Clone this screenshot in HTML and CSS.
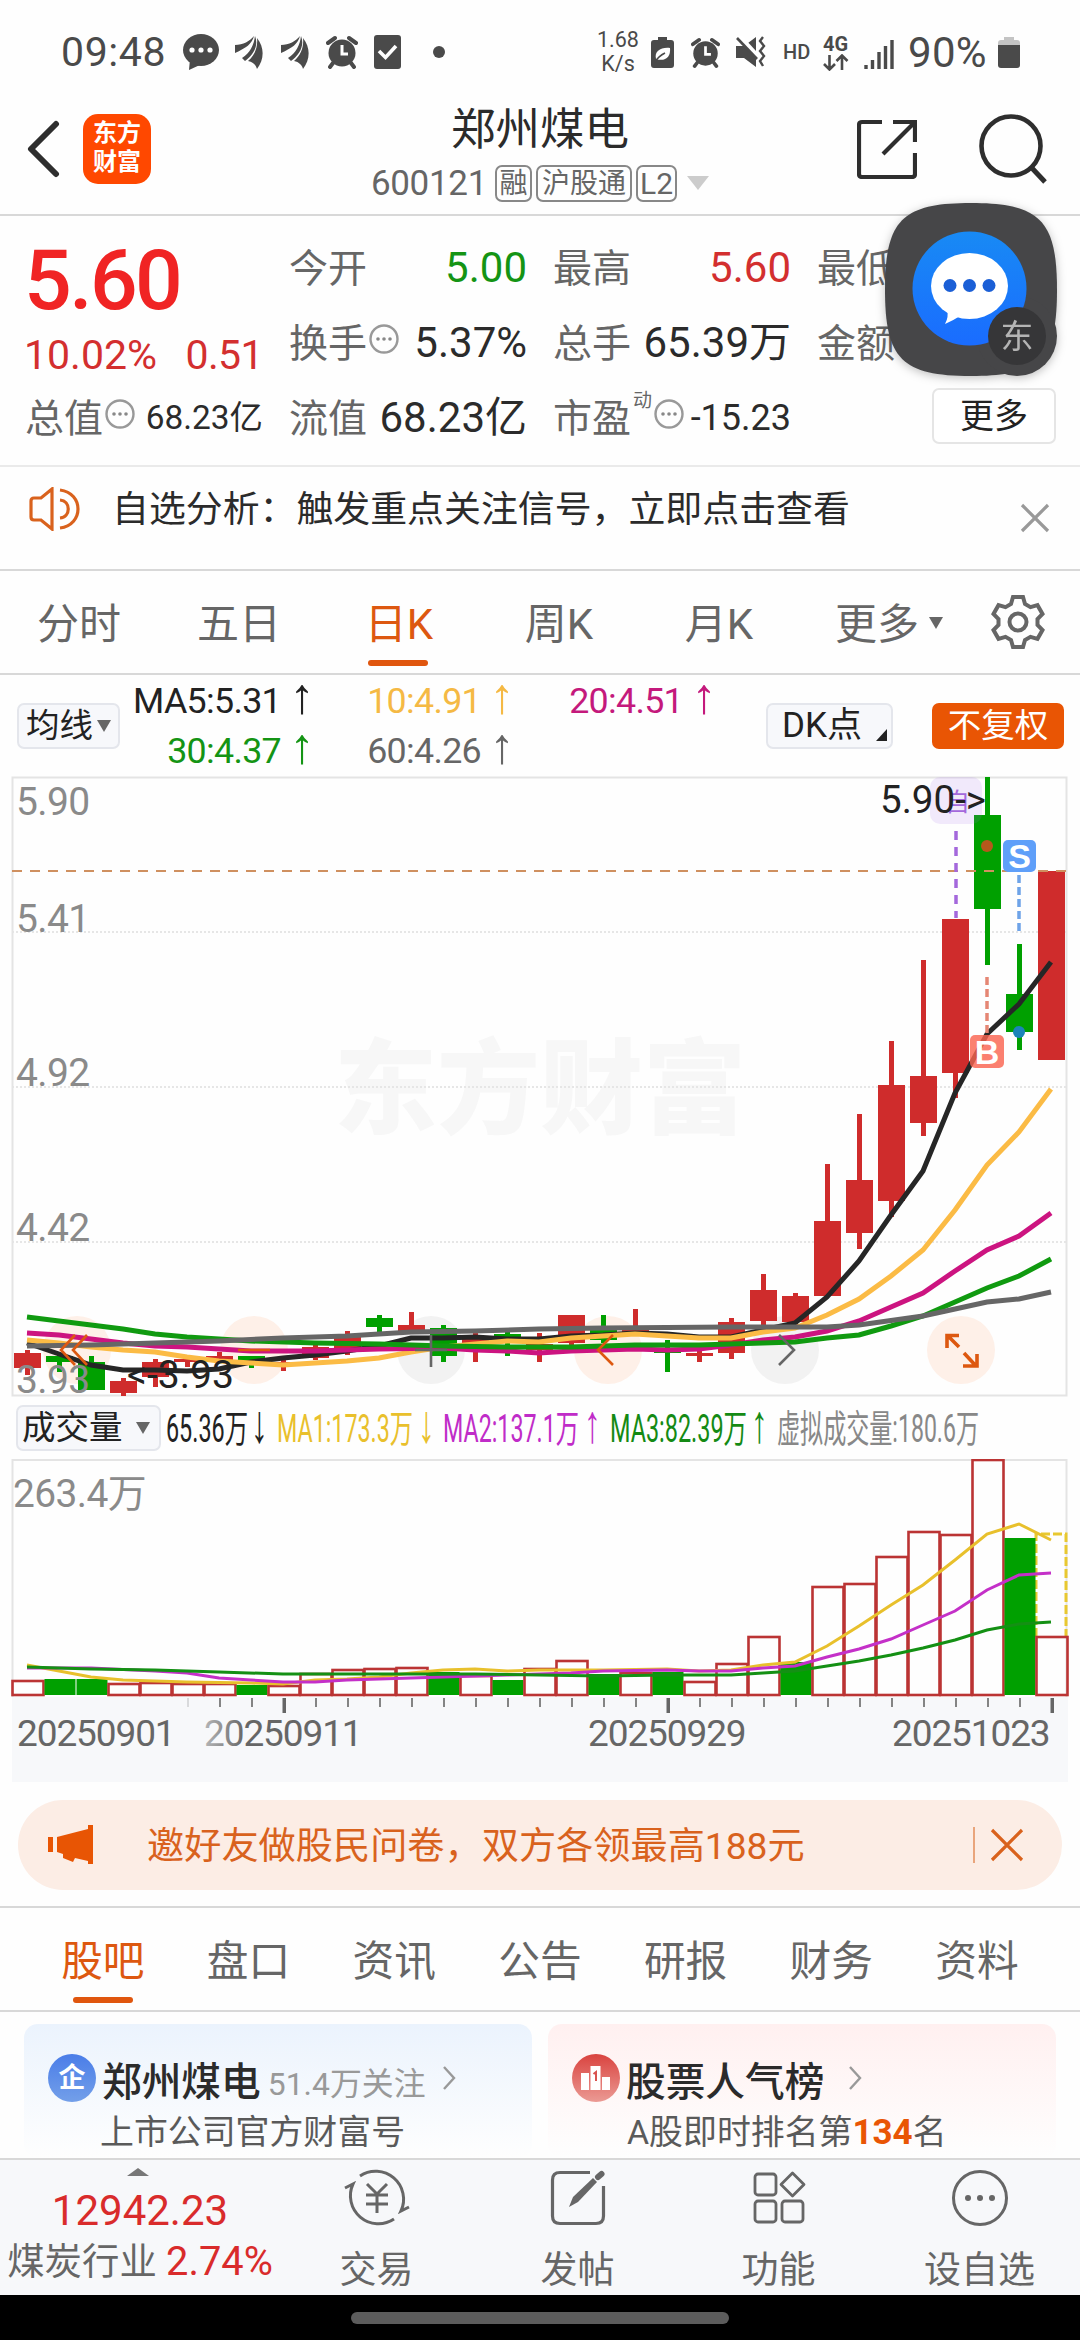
FILE: index.html
```html
<!DOCTYPE html>
<html lang="zh-CN">
<head>
    <meta charset="utf-8">
    <title>郑州煤电 600121</title>
    <link rel="stylesheet" href="styles.css">
</head>
<body>
    <svg class="defs" width="0" height="0">
        <symbol id="more-dots" viewBox="0 0 30 30">
            <circle cx="15" cy="15" r="13.5" fill="none" stroke="#999" stroke-width="2.4"/>
            <circle cx="9" cy="15" r="1.8" fill="#888"/><circle cx="15" cy="15" r="1.8" fill="#888"/><circle cx="21" cy="15" r="1.8" fill="#888"/>
        </symbol>
        <symbol id="alarm" viewBox="0 0 32 34">
            <circle cx="16" cy="18" r="13.5" fill="#4a4a4a"/>
            <path d="M2 8 L9 3 M30 8 L23 3 M7 28 L4 32 M25 28 L28 32" stroke="#4a4a4a" stroke-width="4" stroke-linecap="round"/>
            <path d="M16 10 V19 H22" stroke="#fff" stroke-width="3" fill="none"/>
        </symbol>
        <symbol id="wing" viewBox="0 0 30 34">
            <path d="M1 10 C9 10 16 6 20 1 C18 9 12 13 1 18 Z M8 23 C16 18 20 10 21 1 C25 11 19 20 11 26 Z M14 26 C21 20 24 12 23 3 C31 13 30 25 23 34 C22 30 19 27 14 26 Z" fill="#4a4a4a"/>
        </symbol>
    </svg>

    <div class="statusbar">
        <span class="time">09:48</span>
        <svg class="st-chat" width="38" height="38" viewBox="0 0 38 38"><ellipse cx="19" cy="17" rx="18" ry="16" fill="#4a4a4a"/><path d="M8 26 L7 37 L20 31 Z" fill="#4a4a4a"/><circle cx="10" cy="17" r="2.6" fill="#fff"/><circle cx="19" cy="17" r="2.6" fill="#fff"/><circle cx="28" cy="17" r="2.6" fill="#fff"/></svg>
        <svg class="st-wing" width="30" height="34"><use href="#wing"/></svg>
        <svg class="st-wing" width="30" height="34"><use href="#wing"/></svg>
        <svg class="st-wing" width="32" height="34"><use href="#alarm"/></svg>
        <svg class="st-check" width="27" height="34" viewBox="0 0 27 34"><rect width="27" height="34" rx="3" fill="#4a4a4a"/><path d="M5 16 L11.5 22.5 L22 11" stroke="#fff" stroke-width="3.6" fill="none"/></svg>
        <i class="st-dot"></i>
        <span class="speed">1.68<br>K/s</span>
        <svg class="st-saver" width="23" height="33" viewBox="0 0 23 33"><path d="M7 1 h9 v3 h4 q3 0 3 3 v22 q0 3 -3 3 h-17 q-3 0 -3 -3 v-22 q0 -3 3 -3 h4 z" fill="#4a4a4a"/><path d="M19 12 C10 11 3 15 5 23 C14 26 20 21 19 12 Z" fill="#fff"/><path d="M4 26 C7 21 10 19 14 17" stroke="#4a4a4a" stroke-width="1.6" fill="none"/></svg>
        <svg class="st-alarm" width="29" height="31"><use href="#alarm"/></svg>
        <svg class="st-mute" width="31" height="32" viewBox="0 0 31 32"><path d="M1 10 h8 L21 1 V31 L9 22 H1 Z" fill="#4a4a4a"/><path d="M2 -2 L24 22" stroke="#fff" stroke-width="5"/><path d="M2 2 L22 23" stroke="#4a4a4a" stroke-width="2.6"/><path d="M28 1 l-3 4 l4 5 l-4 5 l4 5 l-4 5 l3 5" fill="none" stroke="#4a4a4a" stroke-width="2.4"/></svg>
        <span class="hd">HD</span>
        <span class="net">4G<svg width="26" height="17" viewBox="0 0 26 17"><path d="M6.500 1 V15 M1 10 L6.500 15.500 L12 10 M19 16 V2 M13.500 7 L19 1.500 L24.500 7" fill="none" stroke="#4a4a4a" stroke-width="2.600"/></svg></span>
        <svg class="st-signal" width="30" height="30" viewBox="0 0 30 30"><path d="M2 26 V30 M8.500 21 V30 M15 13 V30 M21.500 7 V30 M28 1 V30" stroke="#4a4a4a" stroke-width="3.400"/></svg>
        <span class="batt">90%</span>
        <svg class="st-batt" width="22" height="33" viewBox="0 0 22 33"><path d="M6 1 h10 v3 h3 q3 0 3 3 v3 h-22 v-3 q0 -3 3 -3 h3 z" fill="#c4c4c4"/><path d="M0 9 h22 v20 q0 3 -3 3 h-16 q-3 0 -3 -3 z" fill="#4a4a4a"/></svg>
    </div>

    <div class="header">
        <div class="header-left">
            <svg width="34" height="58" viewBox="0 0 34 58"><path d="M30 4 L5 29 L30 54" fill="none" stroke="#2e2e2e" stroke-width="6" stroke-linecap="round" stroke-linejoin="round"/></svg>
            <div class="logo">东方<br>财富</div>
        </div>
        <div class="header-title">
            <div class="name">郑州煤电</div>
            <div class="code"><span>600121</span><b>融</b><b class="wide">沪股通</b><b class="l2">L2</b><i class="caret"></i></div>
        </div>
        <div class="header-right">
            <svg width="60" height="60" viewBox="0 0 60 60"><path d="M25 3 H5 Q2 3 2 6 V55 Q2 58 5 58 H55 Q58 58 58 55 V34 M36 3 H58 V23 M58 3 L26 35" fill="none" stroke="#2e2e2e" stroke-width="4.200"/></svg>
            <svg class="search" width="68" height="70" viewBox="0 0 68 70"><circle cx="32" cy="32" r="29.500" fill="none" stroke="#2e2e2e" stroke-width="4.600"/><path d="M52 53 L66 68" stroke="#2e2e2e" stroke-width="5"/></svg>
        </div>
    </div>

    <div class="quote">
        <div class="quote-main">
            <div class="price">5.60</div>
            <div class="change"><span>10.02%</span><span>0.51</span></div>
            <div class="cell small"><label>总值</label><svg class="tip" width="30" height="30"><use href="#more-dots"/></svg><em class="v34">68.23亿</em></div>
        </div>
        <div class="quote-grid">
            <div class="cell"><label>今开</label><em class="down">5.00</em></div>
            <div class="cell"><label>最高</label><em class="up">5.60</em></div>
            <div class="cell"><label>最低</label></div>
            <div class="cell"><label>换手</label><svg class="tip" width="30" height="30"><use href="#more-dots"/></svg><em>5.37%</em></div>
            <div class="cell"><label>总手</label><em>65.39万</em></div>
            <div class="cell"><label>金额</label></div>
            <div class="cell"><label>流值</label><em>68.23亿</em></div>
            <div class="cell"><label>市盈<sup>动</sup></label><svg class="tip" width="30" height="30"><use href="#more-dots"/></svg><em class="v37">-15.23</em></div>
            <div class="cell end"><button class="more-btn">更多</button></div>
        </div>
    </div>

    <div class="notice">
        <svg width="52" height="44" viewBox="0 0 52 44"><path d="M23 2 L12 11 H5 Q2 11 2 14 V30 Q2 33 5 33 H12 L23 42 Z M31 3 C55 6 55 38 31 41 M31 13 C42 14 42 30 31 31" fill="none" stroke="#d9621d" stroke-width="3.200"/></svg>
        <span>自选分析：触发重点关注信号，立即点击查看</span>
        <svg class="close" width="30" height="30" viewBox="0 0 30 30"><path d="M2 2 L28 28 M28 2 L2 28" stroke="#999" stroke-width="3.200"/></svg>
    </div>

    <div class="period-tabs">
        <span>分时</span><span>五日</span><span class="active">日K</span><span>周K</span><span>月K</span><span class="more">更多<i class="caret dark"></i></span>
        <svg class="gear" width="54" height="54" viewBox="0 0 54 54"><path d="M22 2 H32 L34 9 L39.500 12.200 L46.500 10.200 L51.500 19 L46.500 24 V30 L51.500 35 L46.500 43.800 L39.500 41.800 L34 45 L32 52 H22 L20 45 L14.500 41.800 L7.500 43.800 L2.500 35 L7.500 30 V24 L2.500 19 L7.500 10.200 L14.500 12.200 L20 9 Z" fill="none" stroke="#666" stroke-width="4"/><circle cx="27" cy="27" r="8.500" fill="none" stroke="#666" stroke-width="4"/></svg>
    </div>

    <div class="ma-row">
        <button class="chip ma-chip">均线<i class="caret dark"></i></button>
        <div class="ma-values">
            <span class="ma5">MA5:5.31<i>↑</i></span><span class="ma10">10:4.91<i>↑</i></span><span class="ma20">20:4.51<i>↑</i></span>
            <span class="ma30">30:4.37<i>↑</i></span><span class="ma60">60:4.26<i>↑</i></span>
        </div>
        <button class="chip dk-chip">DK点<i class="corner"></i></button>
        <button class="chip fq-chip">不复权</button>
    </div>

    <svg class="kline" width="1080" height="621" viewBox="0 776 1080 621">
        <text class="watermark" x="334" y="1126" textLength="412">东方财富</text>
        <path class="grid" d="M12 932 H1067 M12 1087 H1067 M12 1242 H1067"/>
        <path class="frame" d="M12.500 777.500 H1066.500 V1395.500 H12.500 Z"/>
        <g class="ctrl">
            <circle cx="77" cy="1350" r="34"/><circle cx="254" cy="1350" r="34"/><circle class="off" cx="431" cy="1350" r="34"/>
            <circle cx="608" cy="1350" r="34"/><circle class="off" cx="785" cy="1350" r="34"/><circle cx="961" cy="1350" r="34"/>
        </g>
        <g id="candles"></g>
        <path class="last" d="M12 871 H1067"/>
        <g id="ma-lines"></g>
        <g class="axis">
            <text x="16" y="815">5.90</text><text x="16" y="932">5.41</text><text x="16" y="1086">4.92</text><text x="16" y="1241">4.42</text><text x="16" y="1393">3.93</text>
        </g>
        <g class="ctrl-icon">
            <path d="M75 1335 L61 1350 L75 1365 M87 1335 L73 1350 L87 1365 M238 1350 H270"/>
            <path class="off" d="M431 1335 V1367 M415 1350 H447 M779 1335 L794 1350 L779 1365"/>
            <path d="M613 1335 L598 1350 L613 1365"/>
            <path class="bold" d="M959 1335.500 H947 V1348 M948 1336 L959 1347 M964 1353 L976 1366 M977 1354 V1366 H963"/>
        </g>
        <rect x="930" y="777" width="52" height="47" rx="10" fill="#a66be8" fill-opacity=".14"/>
        <text class="self" x="945" y="811">自</text>
        <path d="M956 831 V918" stroke="#a468dc" stroke-width="3.500" stroke-dasharray="9 7"/>
        <path d="M987 977 V1034" stroke="#e58674" stroke-width="3.500" stroke-dasharray="8 4"/>
        <path d="M1019 875 V931" stroke="#6ea3e8" stroke-width="3.500" stroke-dasharray="8 4"/>
        <circle cx="987" cy="846" r="6" fill="#b5581c"/><circle cx="1019" cy="1032" r="6" fill="#1b84b8"/>
        <rect x="1003" y="840" width="33" height="32" rx="5" fill="#5f9ff9"/><text class="mark" x="1019.500" y="868">S</text>
        <rect x="970" y="1035" width="34" height="33" rx="5" fill="#fa6450" fill-opacity=".82"/><text class="mark" x="987" y="1064">B</text>
        <text class="peak" x="880" y="813" textLength="106">5.90-&gt;</text>
        <text class="peak" x="127" y="1388" textLength="107">&lt;-3.93</text>
    </svg>

    <div class="vol-row">
        <button class="chip vol-chip">成交量<i class="caret dark"></i></button>
        <svg class="vol-legend" width="900" height="62" viewBox="160 1397 900 62">
            <text x="166" y="1442" textLength="82" fill="#222">65.36万</text><text class="arrow" x="251" y="1442" textLength="17" fill="#222">↓</text>
            <text x="277" y="1442" textLength="136" fill="#e9c02c">MA1:173.3万</text><text class="arrow" x="418" y="1442" textLength="17" fill="#e9c02c">↓</text>
            <text x="443" y="1442" textLength="136" fill="#c02cc8">MA2:137.1万</text><text class="arrow" x="584" y="1442" textLength="17" fill="#c02cc8">↑</text>
            <text x="610" y="1442" textLength="137" fill="#148a14">MA3:82.39万</text><text class="arrow" x="751" y="1442" textLength="17" fill="#148a14">↑</text>
            <text x="777" y="1442" textLength="202" fill="#888">虚拟成交量:180.6万</text>
        </svg>
    </div>

    <svg class="volume" width="1080" height="324" viewBox="0 1459 1080 324">
        <defs><linearGradient id="fade" gradientUnits="userSpaceOnUse" x1="185" x2="245" y1="0" y2="0"><stop offset="0" stop-color="#666" stop-opacity=".2"/><stop offset="1" stop-color="#666"/></linearGradient></defs>
        <rect x="12" y="1697" width="1056" height="85" fill="#f7f8fa"/>
        <path class="frame" d="M12.500 1697 V1460 H1066.500 V1697"/>
        <text class="vmax" x="13" y="1507" textLength="133">263.4万</text>
        <g id="bars"></g>
        <g id="vol-lines"></g>
        <g id="ticks"></g>
        <g class="dates">
            <text x="17" y="1746">20250901</text><text x="204" y="1746" fill="url(#fade)">20250911</text><text x="588" y="1746">20250929</text><text x="892" y="1746">20251023</text>
        </g>
    </svg>

    <div class="banner">
        <svg width="46" height="40" viewBox="0 0 46 40"><path d="M0 12 H5 V27 H0 Z M9 12 L40 4 V0 H45 V39 H40 V36 L27 33 L25 37 L15 33 V29 L9 27 Z" fill="#e85504"/></svg>
        <span>邀好友做股民问卷，双方各领最高188元</span>
        <i class="sep"></i>
        <svg width="34" height="34" viewBox="0 0 34 34"><path d="M2 2 L32 32 M32 2 L2 32" stroke="#d9621d" stroke-width="3.200"/></svg>
    </div>

    <div class="info-tabs">
        <span class="active">股吧</span><span>盘口</span><span>资讯</span><span>公告</span><span>研报</span><span>财务</span><span>资料</span>
    </div>

    <div class="cards">
        <div class="card blue">
            <div class="card-head">
                <i class="ico">企</i>
                <strong>郑州煤电</strong><small>51.4万关注</small>
                <svg width="14" height="24" viewBox="0 0 14 24"><path d="M2 1 L12 12 L2 23" fill="none" stroke="#999" stroke-width="2.400"/></svg>
            </div>
            <p>上市公司官方财富号</p>
        </div>
        <div class="card red">
            <div class="card-head">
                <i class="ico"><svg width="30" height="26" viewBox="0 0 30 26"><path d="M0 8 H8 V25 H0 Z M9.500 1 H19.500 V25 H9.500 Z M21 12 H29 V25 H21 Z" fill="#fff"/><path d="M12.500 9 L15 7 V16" fill="none" stroke="#d9534f" stroke-width="2"/></svg></i>
                <strong>股票人气榜</strong>
                <svg class="far" width="14" height="24" viewBox="0 0 14 24"><path d="M2 1 L12 12 L2 23" fill="none" stroke="#999" stroke-width="2.400"/></svg>
            </div>
            <p>A股即时排名第<b>134</b>名</p>
        </div>
    </div>

    <div class="bottombar">
        <div class="index">
            <i class="caret-up"></i>
            <div class="index-value">12942.23</div>
            <div class="index-name">煤炭行业 <b>2.74%</b></div>
        </div>
        <div class="nav">
            <svg width="66" height="60" viewBox="0 0 66 60"><path d="M16 8 A28 28 0 0 1 57 43 L65 39 M50 51 A28 28 0 0 1 9 16 L1 20" fill="none" stroke="#666" stroke-width="3"/><path d="M23 16 L33 26 L43 16 M33 26 V45 M22 27 H44 M22 36 H44" fill="none" stroke="#666" stroke-width="3"/></svg>
            <span>交易</span>
        </div>
        <div class="nav">
            <svg width="60" height="60" viewBox="0 0 60 60"><path d="M42 4.500 H12 Q4.500 4.500 4.500 12 V48 Q4.500 55.500 12 55.500 H48 Q55.500 55.500 55.500 48 V18" fill="none" stroke="#666" stroke-width="3.200"/><path d="M21 39 L25 29 L45 10 L49 14 L30 34 Z" fill="#666"/><path d="M50 9 L53.500 6" stroke="#666" stroke-width="6" stroke-linecap="round"/></svg>
            <span>发帖</span>
        </div>
        <div class="nav">
            <svg width="60" height="60" viewBox="0 0 60 60"><g fill="none" stroke="#666" stroke-width="2.800"><rect x="6" y="6" width="21" height="21" rx="3"/><rect x="6" y="33" width="21" height="21" rx="3"/><rect x="33" y="33" width="21" height="21" rx="3"/><path d="M43.500 5 L55 16.500 L43.500 28 L32 16.500 Z" stroke-linejoin="round"/></g></svg>
            <span>功能</span>
        </div>
        <div class="nav">
            <svg width="60" height="60" viewBox="0 0 60 60"><circle cx="30" cy="30" r="26.500" fill="none" stroke="#666" stroke-width="3"/><circle cx="18" cy="30" r="3" fill="#666"/><circle cx="30" cy="30" r="3" fill="#666"/><circle cx="42" cy="30" r="3" fill="#666"/></svg>
            <span>设自选</span>
        </div>
    </div>
    <div class="homebar"><i></i></div>

    <div class="floating">
        <svg width="200" height="200" viewBox="870 190 200 200">
            <defs><linearGradient id="msg" x1="0" x2="0" y1="0" y2="1"><stop offset="0" stop-color="#188af4"/><stop offset="1" stop-color="#1a6cff"/></linearGradient></defs>
            <g fill="#464648"><path d="M971 203 C1040 203 1057 220 1057 290 C1057 359 1040 376 971 376 C902 376 885 359 885 290 C885 220 902 203 971 203 Z"/><circle cx="1017" cy="336" r="40"/></g>
            <circle cx="969.500" cy="288.500" r="57" fill="url(#msg)"/>
            <ellipse cx="969.500" cy="286" rx="38.500" ry="33" fill="#fff"/><path d="M947 309 Q949 317 945 324 Q954 320 960 316 Z" fill="#fff"/>
            <circle cx="950" cy="285.500" r="6.500" fill="#1b5fd6"/><circle cx="969.500" cy="285.500" r="6.500" fill="#1b5fd6"/><circle cx="989" cy="285.500" r="6.500" fill="#1b5fd6"/>
            <circle cx="1017" cy="336" r="29" fill="#363638"/>
            <text x="1017" y="348">东</text>
        </svg>
    </div>

    <script src="chart.js"></script>
</body>
</html>
```

FILE: styles.css
```css
* {
    box-sizing: border-box;
}

body {
    margin: 0;
    width: 1080px;
    height: 2340px;
    position: relative;
    overflow: hidden;
    background: #fefefe;
    color: #2b2b2b;
    font-family: Roboto, "Noto Sans CJK SC", sans-serif;
    display: flex;
    flex-direction: column;
}

body > * {
    flex-shrink: 0;
}

svg {
    display: block;
    flex-shrink: 0;
}

i, em {
    font-style: normal;
}

button {
    font-family: inherit;
    padding: 0;
    color: #222;
}

.defs {
    position: absolute;
}

.caret {
    display: inline-block;
    border: 11px solid transparent;
    border-top: 14px solid #ccc;
    border-bottom: 0;
}

.caret.dark {
    border-width: 12px 7px 0;
    border-top-color: #666;
}

/* status bar */
.statusbar {
    height: 104px;
    padding-left: 61px;
    display: flex;
    align-items: center;
    color: #4a4a4a;
}

.time {
    width: 121px;
    font-size: 41px;
    letter-spacing: 0.6px;
}

.st-wing {
    margin-left: 16px;
}

.st-chat + .st-wing {
    margin-left: 14px;
}

.st-check {
    margin-left: 16px;
}

.st-dot {
    width: 12px;
    height: 12px;
    margin-left: 32px;
    border-radius: 50%;
    background: #4a4a4a;
}

.speed {
    width: 44px;
    margin-left: 151px;
    font-size: 21.5px;
    line-height: 24px;
    text-align: center;
}

.st-saver {
    margin-left: 11px;
}

.st-alarm {
    margin-left: 17px;
}

.st-mute {
    margin-left: 15px;
}

.hd {
    margin-left: 17px;
    font-size: 20px;
    font-weight: 500;
    width: 28px;
}

.net {
    margin-left: 12px;
    width: 27px;
    font-size: 20px;
    line-height: 20px;
    font-weight: 700;
}

.st-signal {
    margin-left: 14px;
    margin-top: 3px;
}

.batt {
    margin-left: 14px;
    width: 90px;
    font-size: 42px;
    letter-spacing: 0.3px;
}

/* header */
.header {
    height: 112px;
    display: grid;
    grid-template-columns: 1fr 400px 1fr;
    border-bottom: 2px solid #d8d8d8;
}

.header-left {
    display: flex;
    align-items: center;
    padding: 0 0 21px 26px;
}

.logo {
    width: 68px;
    height: 70px;
    margin-left: 23px;
    padding-top: 5px;
    border-radius: 15px;
    background: #ff4800;
    color: #fff;
    font-size: 24px;
    font-weight: 700;
    line-height: 29px;
    text-align: center;
}

.header-title {
    text-align: center;
}

.name {
    font-size: 44.5px;
    line-height: 52px;
}

.code {
    display: flex;
    align-items: center;
    justify-content: center;
    height: 54px;
    font-size: 35px;
    letter-spacing: -0.3px;
    color: #666;
}

.code b {
    width: 37px;
    height: 37px;
    margin-left: 4px;
    border: 2px solid #888;
    border-radius: 7px;
    font-size: 28px;
    font-weight: 400;
    line-height: 33px;
    letter-spacing: 0;
}

.code span + b {
    margin-left: 8px;
}

.code b.wide {
    width: 96px;
}

.code b.l2 {
    width: 41px;
    font-size: 30px;
}

.code .caret {
    margin-left: 10px;
}

.header-right {
    display: flex;
    align-items: center;
    justify-content: flex-end;
    padding: 0 33px 21px 0;
}

.search {
    margin-left: 62px;
}

/* quote */
.quote {
    height: 251px;
    padding: 14px 24px 0 26px;
    display: flex;
    border-bottom: 2px solid #eaeaea;
}

.quote-main {
    width: 264px;
    padding-right: 26px;
}

.price {
    height: 96px;
    margin-left: -2px;
    line-height: 102px;
    font-size: 84px;
    font-weight: 500;
    letter-spacing: -2.6px;
    color: #f02424;
}

.change {
    height: 54px;
    display: flex;
    justify-content: space-between;
    align-items: center;
    margin-left: -2px;
    padding-top: 3px;
    font-size: 41px;
    color: #d32f2f;
}

.change span + span {
    letter-spacing: -0.6px;
}

.quote-grid {
    flex: 1;
    display: grid;
    grid-template-columns: 238px 238px 239px;
    column-gap: 26px;
    grid-auto-rows: 75px;
    align-content: start;
}

.cell {
    height: 75px;
    display: flex;
    align-items: center;
}

.cell label {
    margin-top: -5px;
    font-size: 39px;
    color: #666;
    white-space: nowrap;
}

.small label {
    margin-left: -1px;
}

.cell em {
    margin-left: auto;
    font-size: 42px;
    line-height: 60px;
    white-space: nowrap;
}

.cell em.v34 {
    font-size: 33.4px;
}

.cell em.v37 {
    font-size: 36px;
}

.cell.end {
    justify-content: flex-end;
    padding-bottom: 3px;
}

.cell sup {
    font-size: 19px;
    line-height: 0;
    vertical-align: 25px;
    margin-left: 2px;
}

.tip {
    margin-top: -8px;
    margin-left: 2px;
}

.up {
    color: #d32f2f;
}

.down {
    color: #149414;
}

.more-btn {
    width: 124px;
    height: 56px;
    border: 2px solid #e5e5e5;
    border-radius: 7px;
    background: #fff;
    font-size: 34px;
    line-height: 50px;
}

/* notice */
.notice {
    height: 104px;
    padding: 0 30px 0 29px;
    display: flex;
    align-items: center;
    border-bottom: 2px solid #d8d8d8;
    font-size: 36.9px;
}

.notice svg {
    margin-top: -18px;
}

.notice span {
    margin: -24px 0 0 31px;
}

.notice .close {
    margin: 0 0 0 auto;
}

/* period tabs */
.period-tabs {
    height: 104px;
    display: flex;
    align-items: center;
    border-bottom: 2px solid #d8d8d8;
    font-size: 42px;
    color: #666;
}

.period-tabs span {
    width: 160px;
    height: 102px;
    line-height: 107px;
    text-indent: -2px;
    text-align: center;
}

.period-tabs .active,
.info-tabs .active {
    color: #dd5810;
    position: relative;
}

.period-tabs .active::after,
.info-tabs .active::after {
    content: "";
    position: absolute;
    left: 50%;
    bottom: 7px;
    width: 60px;
    height: 6px;
    margin-left: -32px;
    border-radius: 3px;
    background: #e0560e;
}

.period-tabs .more {
    width: 172px;
    margin-left: 4px;
}

.period-tabs .caret {
    margin: 0 0 10px 10px;
}

.gear {
    margin-left: 15px;
}

/* ma legend */
.ma-row {
    height: 101px;
    padding: 0 16px 0 17px;
    display: flex;
    align-items: center;
}

.chip {
    height: 46px;
    border: 2px solid #e4e6ec;
    border-radius: 7px;
    background: #f7f8fb;
    font-size: 33.5px;
    line-height: 40px;
    white-space: nowrap;
}

.ma-chip {
    width: 103px;
    text-align: left;
    padding-left: 7px;
}

.chip .caret {
    margin: 0 0 5px 4px;
}

.ma-values {
    display: grid;
    grid-template-columns: 195px 200px 202px;
    grid-auto-rows: 49.5px;
    line-height: 50px;
    font-size: 35.8px;
    letter-spacing: -0.7px;
    text-align: right;
}

.ma-values i {
    display: inline-block;
    width: 26px;
    margin-left: 8px;
    font-family: "Liberation Sans", sans-serif;
    font-size: 50px;
    line-height: 30px;
    text-align: center;
}

.ma5 {
    color: #222;
}

.ma10 {
    color: #f5b944;
}

.ma20 {
    color: #c4197c;
}

.ma30 {
    color: #149414;
}

.ma60 {
    color: #666;
}

.dk-chip {
    width: 127px;
    margin-left: auto;
    padding-left: 14px;
    text-align: left;
    font-size: 35px;
}

.corner {
    display: inline-block;
    margin-left: 14px;
    vertical-align: -4px;
    border-left: 11px solid transparent;
    border-bottom: 12px solid #222;
}

.fq-chip {
    width: 132px;
    margin-left: 39px;
    border: 0;
    background: #e95504;
    color: #fff;
}

/* k line */
.frame {
    fill: none;
    stroke: #e4e4e4;
    stroke-width: 2;
}

.grid {
    stroke: #e6e6e6;
    stroke-width: 2;
    stroke-dasharray: 2 2;
}

.last {
    stroke: #cf9060;
    stroke-width: 1.8;
    stroke-dasharray: 10 8;
}

.watermark {
    font-size: 103px;
    font-weight: 900;
    fill: #f7f7f7;
}

.axis text,
.vmax {
    font-size: 39px;
    fill: #8a8a8a;
    letter-spacing: -0.6px;
}

.ctrl circle {
    fill: #fef0e8;
}

.ctrl .off {
    fill: #f2f2f2;
}

.ctrl-icon path {
    fill: none;
    stroke: #dd5810;
    stroke-width: 2.6;
}

.ctrl-icon .off {
    stroke: #666;
}

.ctrl-icon .bold {
    stroke-width: 3.6;
}

.self {
    font-size: 25px;
    fill: #a468dc;
}

.mark {
    font: bold 34px "Liberation Sans", sans-serif;
    text-anchor: middle;
    fill: #fff;
}

.peak {
    font-size: 38px;
    fill: #222;
}

#ma-lines polyline {
    fill: none;
    stroke-width: 5;
}

/* volume */
.vol-row {
    height: 62px;
    padding-left: 16px;
    display: flex;
    align-items: center;
}

.vol-chip {
    width: 145px;
    padding-left: 4px;
    text-align: left;
}

.vol-chip .caret {
    margin-left: 13px;
}

.vol-legend {
    margin-left: -1px;
}

.vol-legend text {
    font-size: 38px;
}

.vol-legend .arrow {
    font: 54px "Liberation Sans", sans-serif;
}

#vol-lines polyline {
    fill: none;
    stroke-width: 3;
}

.dates {
    font-size: 37px;
    fill: #666;
    letter-spacing: -1.1px;
}

/* banner */
.banner {
    height: 90px;
    margin: 17px 18px 16px;
    padding: 0 38px 0 30px;
    border-radius: 45px;
    background: #fcede5;
    color: #d9621d;
    display: flex;
    align-items: center;
    font-size: 37.2px;
}

.banner span {
    margin: -5px 0 0 53px;
}

.banner .sep {
    width: 2px;
    height: 36px;
    margin: 0 15px 0 auto;
    background: #e9a57c;
}

/* info tabs */
.info-tabs {
    height: 106px;
    padding: 0 30px;
    display: flex;
    border-top: 2px solid #d8d8d8;
    border-bottom: 2px solid #d8d8d8;
    font-size: 41.7px;
    line-height: 108px;
    color: #666;
}

.info-tabs span {
    width: 145.7px;
    text-align: center;
}

.info-tabs .active::after {
    margin-left: -30px;
}

/* cards */
.cards {
    height: 146px;
    padding: 12px 24px 0;
    display: grid;
    grid-template-columns: 508px 508px;
    gap: 16px;
}

.card {
    padding: 29px 24px 0;
    border-radius: 14px;
}

.card.blue {
    background: linear-gradient(#ebf3fd, #fefefe);
}

.card.red {
    background: linear-gradient(#fff0f0, #fefefe);
}

.card-head {
    height: 50px;
    display: flex;
    align-items: center;
}

.ico {
    width: 48px;
    height: 48px;
    border-radius: 50%;
    display: flex;
    align-items: center;
    justify-content: center;
    color: #fff;
    font-size: 27px;
    font-weight: 700;
    line-height: 44px;
}

.blue .ico {
    background: linear-gradient(#4a7de8, #739fe9);
}

.red .ico {
    background: linear-gradient(#d9433f, #eb9a94);
}

.card strong {
    margin: 9px 0 0 6px;
    font-size: 39.7px;
    font-weight: 500;
    line-height: 48px;
}

.card small {
    margin: 5px 16px 0 7px;
    font-size: 31.9px;
    color: #999;
}

.card-head svg.far {
    margin-left: 24px;
}

.card p {
    margin: 7px 0 0 52px;
    font-size: 33.9px;
    line-height: 46px;
    color: #5a5a5a;
}

.card.red p {
    margin-left: 55px;
}

.card p b {
    font-size: 35px;
    color: #e95504;
}

/* bottom bar */
.bottombar {
    height: 137px;
    display: flex;
    border-top: 2px solid #d8d8d8;
    background: #f7f8fa;
}

.index {
    width: 280px;
    margin-right: -4px;
    text-align: center;
    color: #d92b2b;
}

.caret-up {
    display: block;
    width: 0;
    margin: 8px auto 0 127px;
    border: 11px solid transparent;
    border-top: 0;
    border-bottom: 8px solid #777;
}

.index-value {
    margin-top: 10px;
    font-size: 42px;
    line-height: 50px;
}

.index-name {
    font-size: 37.4px;
    line-height: 51px;
    color: #666;
    white-space: nowrap;
}

.index-name b {
    font-size: 39.8px;
    font-weight: 400;
    color: #d92b2b;
}

.nav {
    width: 201px;
    padding-top: 8px;
    display: flex;
    flex-direction: column;
    align-items: center;
    font-size: 37px;
    line-height: 50px;
    color: #666;
}

.nav span {
    margin-top: 18px;
    margin-bottom: -3px;
}

.homebar {
    height: 45px;
    background: #000;
    display: flex;
    justify-content: center;
    padding-top: 17px;
}

.homebar i {
    width: 378px;
    height: 12px;
    border-radius: 6px;
    background: #5c5c5c;
}

/* chat head floating over the page */
.floating {
    position: absolute;
    left: 870px;
    top: 190px;
    filter: drop-shadow(0 2px 5px rgba(0, 0, 0, 0.25));
}

.floating text {
    font-size: 33px;
    fill: #b4b4b4;
    text-anchor: middle;
}
```

FILE: chart.js
```js
var NS = 'http://www.w3.org/2000/svg';
var STEP = 32, X0 = 27.5;

function add(parent, tag, attrs) {
    var el = document.createElementNS(NS, tag);
    for (var k in attrs) el.setAttribute(k, attrs[k]);
    document.getElementById(parent).appendChild(el);
}

function line(parent, color, pts) {
    add(parent, 'polyline', { points: pts, stroke: color });
}

// [up, body top, body bottom, high, low]
var candles = [
    [1, 1353, 1368, 1350, 1375], [0, 1356, 1362, 1356, 1372], [0, 1362, 1390, 1356, 1390], [1, 1381, 1393, 1378, 1396],
    [1, 1362, 1377, 1359, 1387], [1, 1359, 1362, 1358, 1367], [1, 1356, 1360, 1352, 1360], [0, 1356, 1361, 1356, 1368],
    [1, 1362, 1365, 1360, 1371], [1, 1347, 1358, 1345, 1360], [1, 1334, 1349, 1331, 1355], [0, 1318, 1327, 1315, 1334],
    [1, 1325, 1331, 1312, 1331], [0, 1328, 1356, 1325, 1362], [1, 1337, 1343, 1331, 1362], [0, 1334, 1340, 1328, 1356],
    [1, 1344, 1350, 1333, 1362], [1, 1315, 1343, 1315, 1345], [0, 1330, 1340, 1315, 1343], [1, 1330, 1335, 1309, 1335],
    [0, 1350, 1353, 1340, 1372], [1, 1353, 1356, 1349, 1362], [1, 1322, 1353, 1318, 1359], [1, 1290, 1321, 1274, 1325],
    [1, 1296, 1322, 1293, 1329], [1, 1221, 1296, 1164, 1296], [1, 1180, 1233, 1114, 1249], [1, 1085, 1201, 1041, 1217],
    [1, 1076, 1123, 960, 1136], [1, 919, 1073, 919, 1098], [0, 815, 909, 777, 965], [0, 994, 1032, 944, 1050],
    [1, 871, 1060, 871, 1060]
];
candles.forEach(function (c, i) {
    var x = X0 + i * STEP, color = c[0] ? '#cf2c2c' : '#00a000';
    add('candles', 'rect', { x: x - 2.5, y: c[3], width: 5, height: c[4] - c[3], fill: color });
    add('candles', 'rect', { x: x - 13.5, y: c[1], width: 27, height: c[2] - c[1], fill: color });
});

line('ma-lines', '#262626', '27,1343 59,1354 91,1365 123,1370 155,1370 187,1371 219,1369 251,1362 283,1358 315,1355 347,1351 379,1346 411,1338 443,1338 475,1337 507,1339 539,1339 571,1336 603,1335 635,1333 667,1334 699,1337 731,1337 763,1330 795,1323 827,1297 859,1261 891,1215 923,1171 955,1093 987,1034 1019,1004 1051,962');
line('ma-lines', '#fbbb45', '27,1340 59,1343 91,1347 123,1350 155,1352 187,1357 219,1361 251,1363 283,1365 315,1363 347,1361 379,1358 411,1352 443,1347 475,1344 507,1341 539,1342 571,1338 603,1336 635,1334 667,1336 699,1338 731,1338 763,1332 795,1328 827,1315 859,1299 891,1276 923,1250 955,1210 987,1165 1019,1132 1051,1089');
line('ma-lines', '#cc1480', '27,1333 59,1335 91,1339 123,1343 155,1346 187,1347 219,1349 251,1351 315,1351 379,1349 443,1348 475,1350 507,1351 539,1353 571,1351 635,1349 667,1350 699,1349 731,1345 763,1340 795,1337 827,1331 859,1321 891,1307 923,1293 955,1271 987,1250 1019,1236 1051,1213');
line('ma-lines', '#109a10', '27,1317 59,1321 91,1325 123,1329 155,1334 187,1337 219,1339 251,1341 315,1343 379,1344 443,1346 507,1347 571,1347 635,1345 699,1345 763,1343 795,1342 827,1338 859,1335 891,1326 923,1316 955,1302 987,1288 1019,1276 1051,1259');
line('ma-lines', '#666', '27,1346 91,1345 155,1343 219,1341 283,1338 347,1336 411,1332 475,1331 539,1329 603,1328 731,1327 827,1327 859,1325 923,1316 955,1309 987,1302 1019,1299 1051,1292');

// volume bars: [up, top]
var bars = [
    [1, 1681], [0, 1679], [0, 1679], [1, 1684], [1, 1683], [1, 1684], [1, 1684], [0, 1685], [1, 1686], [1, 1674], [1, 1670],
    [1, 1669], [1, 1668], [0, 1672], [1, 1676], [0, 1680], [1, 1669], [1, 1661], [0, 1674], [1, 1673], [0, 1672], [1, 1682],
    [1, 1664], [1, 1637], [0, 1662], [1, 1587], [1, 1584], [1, 1557], [1, 1532], [1, 1535], [1, 1460], [0, 1538], [1, 1637]
];
var BASE = 1695;
add('bars', 'path', { d: 'M1036 1637 V1534 H1066 V1637', fill: 'none', stroke: '#e8c830', 'stroke-width': 3, 'stroke-dasharray': '9 3' });
bars.forEach(function (b, i) {
    var x = 12 + i * STEP;
    if (b[0]) {
        add('bars', 'rect', { x: x + 0.5, y: b[1], width: 31, height: BASE - b[1], fill: 'none', stroke: '#bb3434', 'stroke-width': 2.6 });
    } else {
        add('bars', 'rect', { x: x + 0.5, y: b[1], width: 31, height: BASE - b[1], fill: '#00a000' });
    }
});

line('vol-lines', '#e8c02c', '27,1665 59,1671 91,1677 123,1680 187,1682 251,1683 283,1684 315,1680 347,1679 379,1677 411,1673 443,1670 475,1669 507,1671 539,1670 603,1670 667,1669 699,1671 731,1670 763,1665 795,1662 827,1646 859,1626 891,1605 923,1585 955,1560 987,1534 1019,1524 1051,1540');
line('vol-lines', '#c430c8', '27,1668 91,1668 155,1671 187,1673 219,1678 251,1680 283,1682 315,1682 347,1680 411,1678 443,1677 507,1675 571,1673 603,1671 667,1670 699,1671 731,1671 763,1668 795,1666 827,1657 859,1649 891,1639 923,1625 955,1611 987,1590 1019,1575 1051,1573');
line('vol-lines', '#149014', '27,1667 91,1669 155,1670 219,1672 283,1674 379,1674 475,1674 539,1675 603,1676 667,1675 731,1675 763,1673 795,1671 827,1666 859,1661 891,1655 923,1648 955,1640 987,1630 1019,1624 1051,1622');

for (var i = 5; i < 33; i++) {
    var major = i % 12 === 8;
    add('ticks', 'rect', {
        x: 28 + i * STEP - (major ? 1.5 : 1), y: 1698, width: major ? 3.5 : 2, height: major ? 15 : 9,
        fill: '#666', 'fill-opacity': i === 5 ? 0.2 : major ? 1 : 0.8
    });
}

document.querySelectorAll('text[textLength]').forEach(function (t) {
    t.setAttribute('lengthAdjust', 'spacingAndGlyphs');
});
```
